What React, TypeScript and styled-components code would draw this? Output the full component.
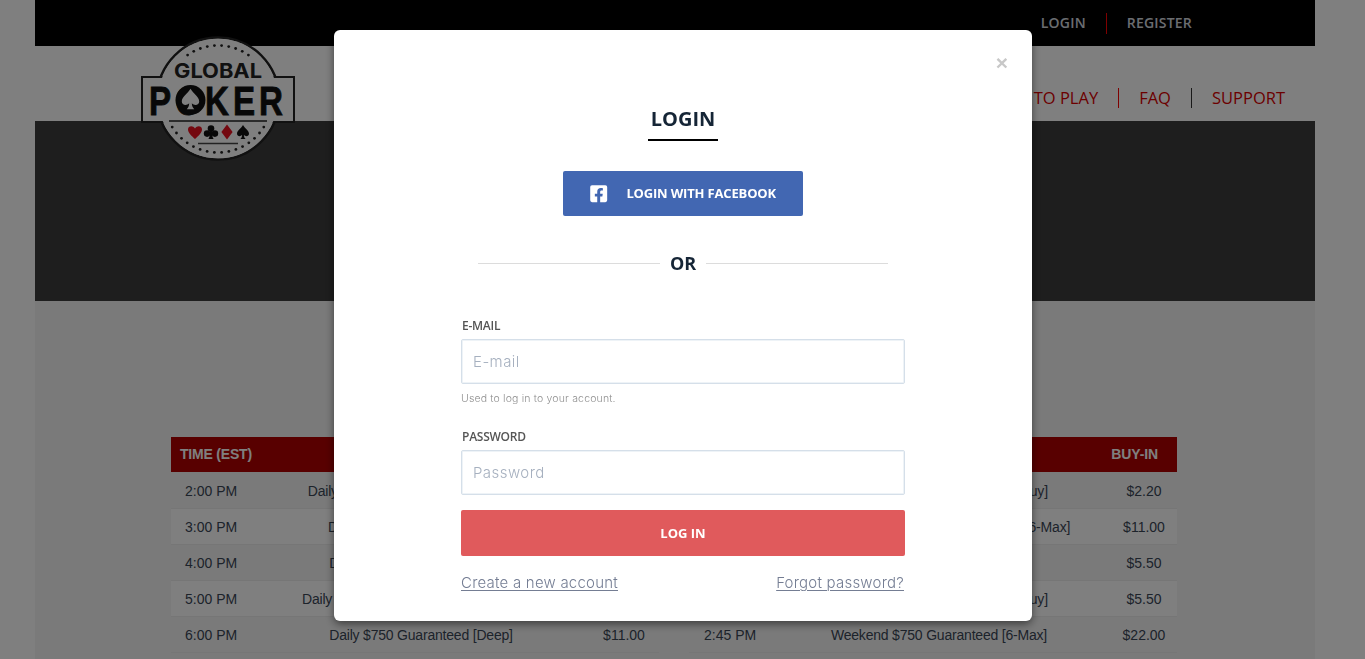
import React from "react";
import styled, { createGlobalStyle } from "styled-components";
import { FaFacebookSquare } from "react-icons/fa";

const Global = createGlobalStyle`
  html, body { margin: 0; padding: 0; height: 100%; overflow: hidden; background: #fff; }
  * { box-sizing: border-box; }
`;

const OPEN = `"Open Sans", "Noto Sans", sans-serif`;
const ARIAL = `"Liberation Sans", Arial, sans-serif`;
const MONT = `Inter, "Open Sans", sans-serif`;

const Page = styled.div`
  width: 1280px;
  margin-left: 35px;
  height: 659px;
  overflow: hidden;
  background: #f5f5f5;
  position: relative;
`;
const TopBar = styled.div`
  height: 46px;
  background: #000;
  display: flex;
  justify-content: flex-end;
  align-items: center;
  padding-right: 123px;
  font: 600 14px/20px ${OPEN};
  letter-spacing: 0.2px;
`;
const TopLink = styled.a`
  color: #d6dbe0;
  padding-left: 20px;
  padding-right: 20px;
  height: 21px;
  display: flex;
  align-items: center;
  &:last-child { padding-right: 0; }
  & + & { border-left: 1px solid #ff0000; }
`;
const Header = styled.div`
  height: 75px;
  background: #fff;
  display: flex;
  justify-content: flex-end;
  align-items: flex-end;
  padding: 0 30px 13px 0;
`;
const NavLink = styled.a<{ $divider?: string }>`
  color: #d80000;
  font: 400 16.5px/20px ${OPEN};
  padding-left: 20px;
  padding-right: 20px;
  &:last-child { padding-right: 0; }
  border-left: ${(p) => (p.$divider ? `1px solid ${p.$divider}` : "none")};
`;
const LogoSlot = styled.div`
  position: absolute;
  left: 105px;
  top: 36px;
  width: 156px;
  height: 126px;
  svg { overflow: visible; display: block; }
`;
const Hero = styled.div`
  height: 180px;
  background: #3c3c3c;
`;
const Section = styled.div`
  padding: 136px 138px 0 136px;
  display: flex;
  gap: 30px;
`;
const Table = styled.div`
  width: 488px;
  flex: none;
  font: 400 14px/20px ${ARIAL};
  color: #3a4656;
`;
const HeadRow = styled.div`
  height: 35px;
  margin-bottom: 1px;
  background: #b00000;
  color: #fff;
  font-weight: 700;
  letter-spacing: -0.2px;
  padding-bottom: 2px;
  display: grid;
  grid-template-columns: 80px 340px 68px;
  align-items: center;
  span:first-child { padding-left: 9px; white-space: nowrap; }
  span:nth-child(2) { text-align: center; }
  span:last-child { text-align: right; padding-right: 19px; white-space: nowrap; letter-spacing: -0.1px; }
`;
const Row = styled.div<{ $even: boolean }>`
  height: 36px;
  background: ${(p) => (p.$even ? "#fff" : "#f5f5f5")};
  border-bottom: 1px solid #ededed;
  display: grid;
  grid-template-columns: 80px 340px 68px;
  align-items: center;
  white-space: nowrap;
`;
const TimeCell = styled.span<{ $inset: number }>`
  padding-left: ${(p) => p.$inset}px;
`;
const NameCell = styled.span`
  text-align: center;
  letter-spacing: -0.2px;
`;
const PriceCell = styled.span<{ $shift: number }>`
  text-align: center;
  transform: translateX(${(p) => p.$shift}px);
`;

const Overlay = styled.div`
  position: fixed;
  inset: 0;
  background: rgba(0, 0, 0, 0.5);
  display: flex;
  justify-content: flex-start;
  align-items: flex-start;
  padding: 30px 0 0 334px;
`;
const Modal = styled.div`
  position: relative;
  width: 698px;
  height: 591px;
  background: #fff;
  border-radius: 6px;
  box-shadow: 0 3px 9px rgba(0, 0, 0, 0.5);
  padding-top: 75px;
  display: flex;
  flex-direction: column;
  align-items: center;
`;
const Close = styled.span`
  position: absolute;
  top: 21px;
  right: 24px;
  font: 700 21px/24px ${ARIAL};
  color: #c8c8c8;
`;
const Title = styled.h2`
  margin: 0;
  width: 70px;
  height: 36px;
  border-bottom: 2px solid #000;
  text-align: center;
  font: 700 20px/28px ${OPEN};
  letter-spacing: 0;
  color: #152536;
`;
const FacebookButton = styled.button`
  margin-top: 30px;
  width: 240px;
  height: 45px;
  border: 0;
  border-radius: 2px;
  background: #4267b2;
  color: #fff;
  font: 700 13px/20px ${OPEN};
  letter-spacing: -0.17px;
  display: flex;
  align-items: center;
  padding: 0 0 2px 26px;
  gap: 18px;
  svg { flex: none; margin-top: 2px; }
`;
const OrRow = styled.div`
  margin-top: 35px;
  width: 410px;
  height: 24px;
  display: flex;
  align-items: center;
  gap: 10px;
  font: 700 18px/24px ${OPEN};
  color: #152536;
  &::before, &::after {
    content: "";
    flex: 1;
    height: 1px;
    background: #dcdcdc;
  }
`;
const Form = styled.form`
  margin-top: 42px;
  width: 444px;
  display: flex;
  flex-direction: column;
`;
const Label = styled.label<{ $gap?: number }>`
  margin-top: ${(p) => p.$gap ?? 0}px;
  padding-left: 1px;
  font: 600 12px/18px ${OPEN};
  letter-spacing: -0.25px;
  color: #555;
`;
const Input = styled.input`
  margin-top: 4px;
  height: 45px;
  border: 1px solid #d5dfe9;
  box-shadow: inset 0 0 0 1px #eef3f7;
  border-radius: 2px;
  padding: 0 11px;
  outline: none;
  background: #fff;
  font: 300 15px/20px ${MONT};
  letter-spacing: 0.45px;
  &::placeholder { color: #a6b0bf; opacity: 1; }
`;
const Help = styled.div`
  margin-top: 7px;
  margin-bottom: 1px;
  padding-top: 1px;
  font: 300 10.5px/14px ${MONT};
  letter-spacing: 0.17px;
  color: #8f8f8f;
`;
const Submit = styled.button`
  margin-top: 15px;
  height: 46px;
  border: 0;
  border-radius: 2px;
  background: #e05a5c;
  color: #fff;
  font: 700 13px/20px ${OPEN};
`;
const Links = styled.div`
  margin-top: 17px;
  padding-right: 1px;
  display: flex;
  justify-content: space-between;
  font: 300 15px/20px ${MONT};
  letter-spacing: 0.22px;
`;
const TextLink = styled.a`
  color: #747d93;
  text-decoration: underline;
  text-underline-offset: 2px;
  text-decoration-thickness: 1px;
`;

const dots = (from: number, to: number, n: number, r: number) =>
  Array.from({ length: n }, (_, i) => {
    const a = ((from + ((to - from) * i) / (n - 1)) * Math.PI) / 180;
    return [78 + r * Math.cos(a), 62.5 + r * Math.sin(a)];
  });

const SPADE = "M0 -7C2 -3.5 6 -1.5 6 1.8C6 4.2 2.8 5 0.9 3C1 5 1.6 6.2 2.6 7H-2.6C-1.6 6.2 -1 5 -0.9 3C-2.8 5 -6 4.2 -6 1.8C-6 -1.5 -2 -3.5 0 -7Z";
const HEART = "M0 7C-3 4 -7 1 -7 -2.6C-7 -6.4 -2 -7 0 -3.6C2 -7 7 -6.4 7 -2.6C7 1 3 4 0 7Z";
const DIAMOND = "M0 -7.5L5.6 0L0 7.5L-5.6 0Z";

const Logo = () => (
  <svg width="156" height="126" viewBox="0 0 156 126">
    <circle cx="78" cy="62.5" r="61" fill="#fff" stroke="#222" strokeWidth="2.5" />
    <rect x="2" y="41" width="152" height="45" fill="#fff" stroke="#222" strokeWidth="2" />
    <circle cx="78" cy="62.5" r="59.7" fill="#fff" />
    <rect x="3" y="42" width="150" height="43" fill="#fff" />
    <line x1="29" y1="85" x2="127" y2="85" stroke="#222" strokeWidth="1.6" />
    <line x1="58" y1="107.5" x2="98" y2="107.5" stroke="#444" strokeWidth="1.6" />
    {[...dots(-125, -55, 10, 53), ...dots(32, 148, 16, 54)].map(([x, y], i) => (
      <circle key={i} cx={x} cy={y} r="1.4" fill="#222" />
    ))}
    <text x="78" y="42" textAnchor="middle" textLength="88" lengthAdjust="spacingAndGlyphs" fontFamily="Inter, sans-serif" fontWeight="700" fontSize="20" fill="#222">GLOBAL</text>
    <text x="78" y="79" textAnchor="middle" textLength="138" lengthAdjust="spacingAndGlyphs" letterSpacing="5" fontFamily={ARIAL} fontWeight="700" fontSize="41" fill="#111" stroke="#111" strokeWidth="0.9">POKER</text>
    <circle cx="50.5" cy="64" r="15" fill="#111" />
    <path d={SPADE} transform="translate(50.5 63) scale(1.45)" fill="#fff" />
    <path d={HEART} transform="translate(55 96)" fill="#e8101f" />
    <g transform="translate(71 96)" fill="#111">
      <circle cx="0" cy="-3.4" r="3.3" />
      <circle cx="-3.9" cy="1.6" r="3.3" />
      <circle cx="3.9" cy="1.6" r="3.3" />
      <path d="M-0.9 -1H0.9C1 3 1.6 5.5 2.6 7H-2.6C-1.6 5.5 -1 3 -0.9 -1Z" />
    </g>
    <path d={DIAMOND} transform="translate(87 96)" fill="#e8101f" />
    <path d={SPADE} transform="translate(103 96)" fill="#111" />
  </svg>
);

type R = [string, string, string];
const left: R[] = [
  ["2:00 PM", "Daily $1,000 Guaranteed [Double Up]", "$2.20"],
  ["3:00 PM", "Daily $750 Guaranteed [Turbo]", "$11.00"],
  ["4:00 PM", "Daily $500 Guaranteed [Deep]", "$5.50"],
  ["5:00 PM", "Daily $1,000 Guaranteed [Rebuy Deep]", "$5.50"],
  ["6:00 PM", "Daily $750 Guaranteed [Deep]", "$11.00"],
];
const right: R[] = [
  ["10:00 AM", "Weekend $500 Guaranteed [Rebuy]", "$2.20"],
  ["11:00 AM", "Weekend $750 Guaranteed [Turbo] [6-Max]", "$11.00"],
  ["12:00 PM", "Weekend $500 Guaranteed", "$5.50"],
  ["1:00 PM", "Weekend $500 Guaranteed [Rebuy]", "$5.50"],
  ["2:45 PM", "Weekend $750 Guaranteed [6-Max]", "$22.00"],
];

const ScheduleTable = ({ rows, inset, shift }: { rows: R[]; inset: number; shift: number }) => (
  <Table>
    <HeadRow>
      <span>TIME (EST)</span>
      <span>TOURNAMENT</span>
      <span>BUY-IN</span>
    </HeadRow>
    {rows.map((r, i) => (
      <Row key={r[0]} $even={i % 2 === 1}>
        <TimeCell $inset={inset}>{r[0]}</TimeCell>
        <NameCell>{r[1]}</NameCell>
        <PriceCell $shift={shift}>{r[2]}</PriceCell>
      </Row>
    ))}
  </Table>
);

export default function App() {
  return (
    <>
      <Global />
      <Page>
        <TopBar>
          <TopLink>LOGIN</TopLink>
          <TopLink>REGISTER</TopLink>
        </TopBar>
        <Header>
          <NavLink $divider="#ff0000">HOW TO PLAY</NavLink>
          <NavLink $divider="#ff0000">FAQ</NavLink>
          <NavLink $divider="#333">SUPPORT</NavLink>
        </Header>
        <LogoSlot>
          <Logo />
        </LogoSlot>
        <Hero />
        <Section>
          <ScheduleTable rows={left} inset={14} shift={-1} />
          <ScheduleTable rows={right} inset={15} shift={1} />
        </Section>
      </Page>
      <Overlay>
        <Modal>
          <Close>×</Close>
          <Title>LOGIN</Title>
          <FacebookButton type="button">
            <FaFacebookSquare size={19.4} />
            LOGIN WITH FACEBOOK
          </FacebookButton>
          <OrRow>OR</OrRow>
          <Form>
            <Label>E-MAIL</Label>
            <Input placeholder="E-mail" />
            <Help>Used to log in to your account.</Help>
            <Label $gap={21}>PASSWORD</Label>
            <Input placeholder="Password" type="password" />
            <Submit type="button">LOG IN</Submit>
            <Links>
              <TextLink>Create a new account</TextLink>
              <TextLink>Forgot password?</TextLink>
            </Links>
          </Form>
        </Modal>
      </Overlay>
    </>
  );
}
